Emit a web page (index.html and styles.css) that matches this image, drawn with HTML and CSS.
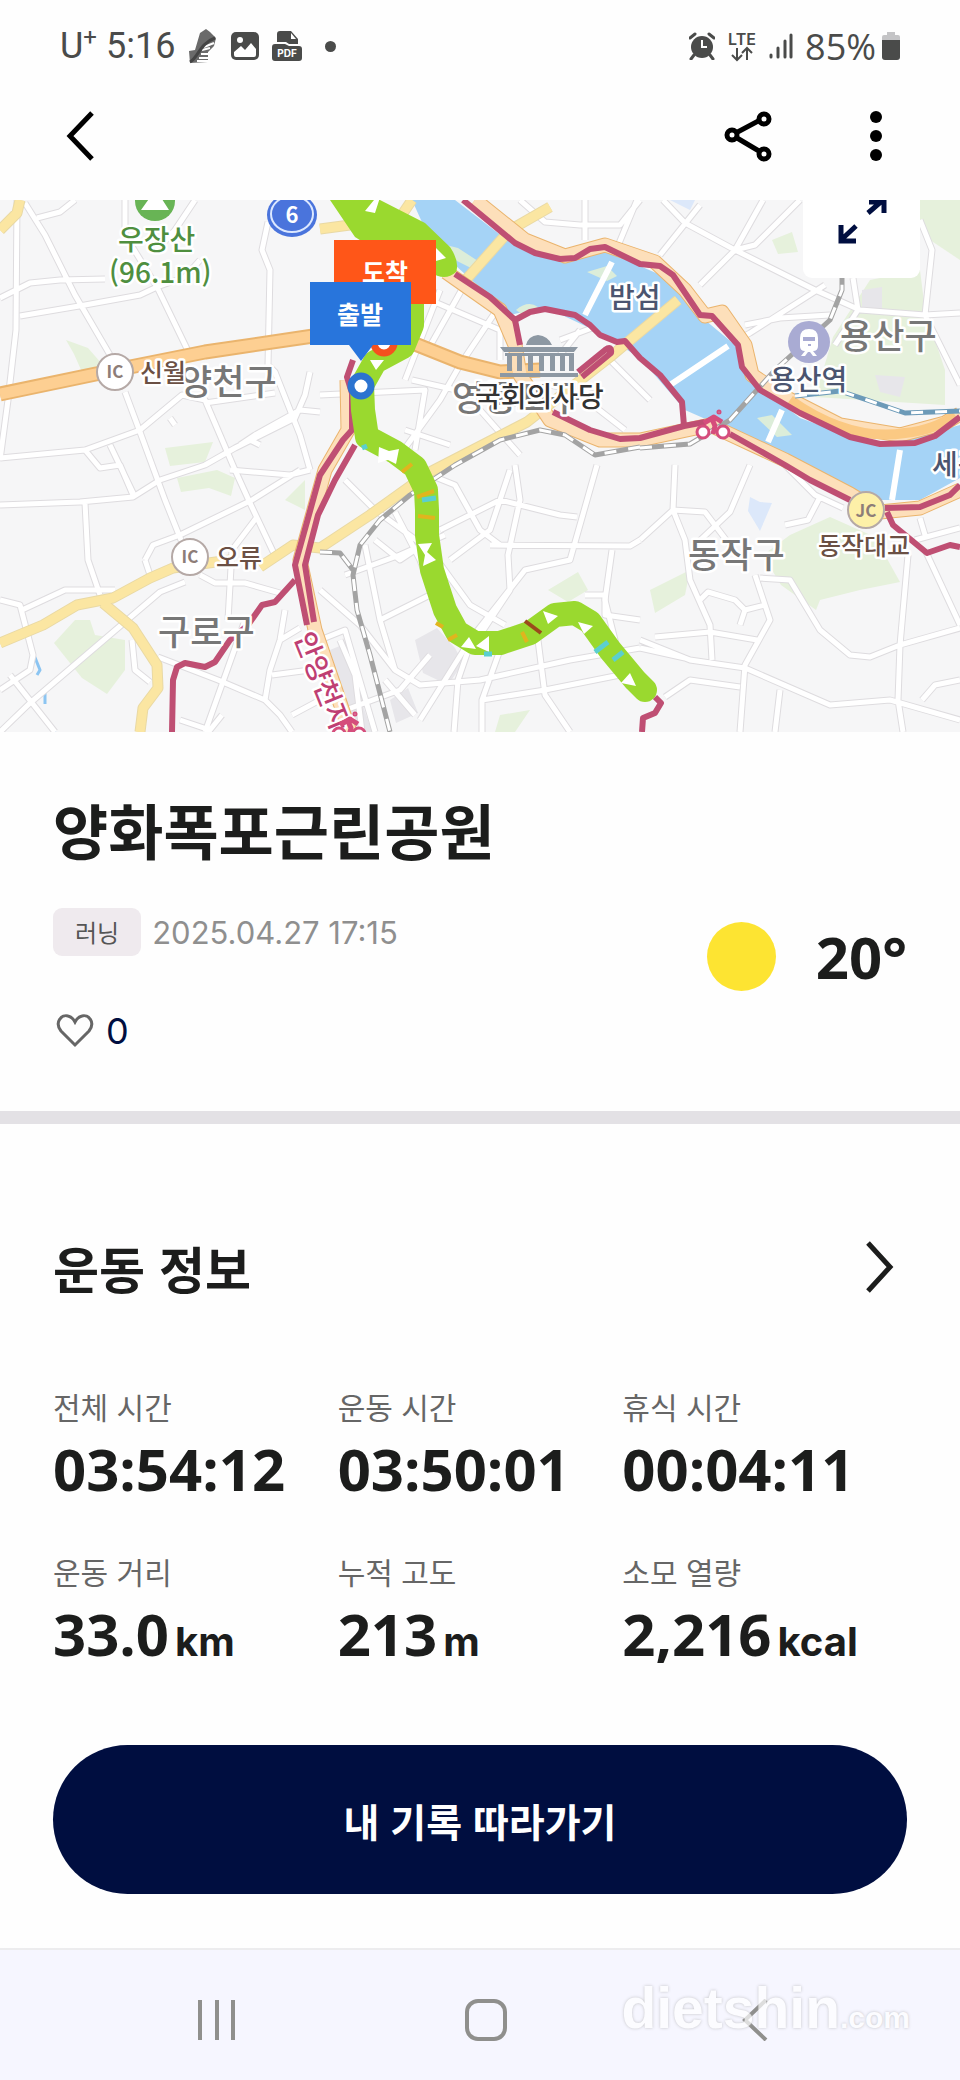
FILE: index.html
```
<!DOCTYPE html>
<html lang="ko">
<head>
    <meta charset="UTF-8" />
    <meta name="viewport" content="width=device-width, initial-scale=1" />
    <title>양화폭포근린공원</title>
    <link rel="stylesheet" href="styles.css">
</head>
<body>
    <div class="status-bar">
        <div class="status-left">
            <span class="carrier">U<sup>+</sup></span>
            <span class="clock">5:16</span>
            <svg class="status-shoe" width="30" height="36" viewBox="0 0 30 36">
                <path d="M1 23l6-1 5-17 6-4 4 3 6 6-2 8-6 6v10L2 35z" fill="#6a6a6a" />
                <path d="M16 19l10-4M14 22l8-2M13 26h7M11 30h9M9 33h11" stroke="#fff" stroke-width="2" />
                <path d="M2 34c8-4 10-19 25-24" stroke="#444" stroke-width="3" fill="none" />
            </svg>
            <svg class="status-photo" width="28" height="28" viewBox="0 0 28 28">
                <rect width="28" height="28" rx="5" fill="#4a4b4a" />
                <circle cx="9" cy="8" r="3" fill="#fff" />
                <path d="M3 20l7-6 4 4 6-7 5 6v6q0 2-2 2H5q-2 0-2-2z" fill="#fff" />
            </svg>
            <svg class="status-pdf" width="30" height="30" viewBox="0 0 30 30">
                <path d="M5 11V3q0-3 3-3h11l7 8v5h-9l-3-2z" fill="#4a4b4a" />
                <path d="M19 2v6h5z" fill="#fff" />
                <path d="M0 16q0-3 3-3h10l4 2h10q3 0 3 3v9q0 3-3 3H3q-3 0-3-3z" fill="#4a4b4a" />
                <text x="15" y="26" text-anchor="middle" class="pdf-text">PDF</text>
            </svg>
            <span class="status-dot"></span>
        </div>
        <div class="status-right">
            <svg width="26" height="28" viewBox="0 0 26 28">
                <circle cx="13" cy="15" r="11" fill="#4a4b4a" />
                <path d="M1 6l5-4M25 6l-5-4M5 23l-3 4M21 23l3 4" stroke="#4a4b4a" stroke-width="3" stroke-linecap="round" />
                <path d="M13 8v7h5" stroke="#fff" stroke-width="2" fill="none" />
            </svg>
            <svg width="30" height="32" viewBox="0 0 30 32">
                <text x="15" y="15" text-anchor="middle" class="lte-text">LTE</text>
                <path d="M10 18v11M5 25l5 5 5-5M20 30V19M15 23l5-5 5 5" stroke="#4a4b4a" stroke-width="2" fill="none" />
            </svg>
            <svg width="24" height="26" viewBox="0 0 24 26">
                <path d="M2 22v2M9 15v9M16 8v16M22 2v22" stroke="#4a4b4a" stroke-width="3" stroke-linecap="round" />
            </svg>
            <span class="battery-text">85%</span>
            <svg width="18" height="28" viewBox="0 0 18 28">
                <path d="M0 8V5q0-2 2-2h3V0h8v3h3q2 0 2 2v3z" fill="#c4c4c6" />
                <path d="M0 8h18v17q0 3-3 3H3q-3 0-3-3z" fill="#4a4b4a" />
            </svg>
        </div>
    </div>

    <header class="app-bar">
        <button type="button" class="icon-btn" aria-label="뒤로">
            <svg width="30" height="52" viewBox="0 0 30 52">
                <path d="M26 3L4 26l22 23" stroke="#000" stroke-width="5" fill="none" />
            </svg>
        </button>
        <div class="app-actions">
            <button type="button" class="icon-btn" aria-label="공유">
                <svg width="48" height="52" viewBox="0 0 48 52">
                    <path d="M8 25L40 8M8 25l32 19" stroke="#000" stroke-width="5" />
                    <g fill="#fff" stroke="#000" stroke-width="5">
                        <circle cx="8" cy="25" r="5" />
                        <circle cx="40" cy="9" r="5" />
                        <circle cx="40" cy="44" r="5" />
                    </g>
                </svg>
            </button>
            <button type="button" class="icon-btn" aria-label="더보기">
                <svg width="12" height="52" viewBox="0 0 12 52">
                    <circle cx="6" cy="7" r="6" />
                    <circle cx="6" cy="26" r="6" />
                    <circle cx="6" cy="45" r="6" />
                </svg>
            </button>
        </div>
    </header>

    <div class="map">
        <svg class="map-canvas" viewBox="0 200 960 532" preserveAspectRatio="xMidYMid slice">
            <defs>
                <g id="streets">
                    <path d="M17 200L16 330L8 400L0 460M25 203L45 235L75 295L110 355M125 392L140 432L165 500L183 545M37 218L60 212L75 200M0 298L30 283L60 280L105 279M20 316L85 305L140 295L157 287L185 277L200 260M125 200V235L157 287L190 355" />
                    <path d="M155 252L175 230L195 200M268 222L262 250L270 270L268 365L275 372L300 435L310 470M0 458L85 450L140 430L182 395L205 400L235 470L250 503L277 560M85 450L100 468L120 465L133 495M110 445L135 497" />
                    <path d="M0 505L80 502L133 497L160 480L205 465L235 448L295 418L305 395L310 372M85 503L88 560L100 595M170 418L175 425M205 403L275 393M240 445L255 435L300 410L320 412M250 440L260 445" />
                    <path d="M230 470L290 475L310 470M145 560L153 545L180 535L252 500L300 470M145 560L150 575M200 575L215 583L245 583L280 593M257 517L232 550L228 620M0 600L20 605L33 655L30 670L0 690M22 610L65 590L115 590M185 582L160 592L30 703L0 732M10 675L55 732" />
                    <path d="M158 657L218 680L265 700L280 715L292 732M292 715L320 700M245 620L205 732M285 610L280 640L270 670L265 700M272 675L310 670M132 640L135 670L150 682M180 720L210 730L222 715M280 640L300 628" />
                    <path d="M345 480L375 510L430 550L470 605L505 625M430 475L455 485L480 530L500 545M395 512L420 560L435 600M375 540L400 560L430 540M345 575L400 555L445 535M365 545L380 620L395 670M440 530L500 500L520 505L560 515L577 517M515 465L520 500L508 555L510 590L480 635M450 560L490 530L510 470M490 545L630 546L640 540M597 465L570 560L525 570L470 640L420 720" />
                    <path d="M612 550L605 600L620 660M320 590L360 625L395 670L420 685L480 680L570 660L640 648M380 620L440 590M340 712L400 690L430 655M470 645L458 680L454 732M500 650L482 700L482 732M482 700L545 690L620 675M538 640L545 695L570 732M320 640L345 630L375 732M340 640L355 675L362 732M385 680L415 715" />
                    <path d="M585 595L605 595L605 615L640 620M325 300L380 330M440 290L405 380M470 275L425 355M500 305L460 365L440 400L400 455M430 300L500 330L500 360M412 380L545 410M550 385L600 395M320 395L425 390L415 450M405 430L450 445M480 410L520 455M580 330L560 355M610 360L650 400M580 395L625 430M560 340L640 310" />
                    <path d="M520 200L545 222L580 225L620 225L640 200M585 200L585 240M637 200L610 265M450 200L440 215M663 200L685 223L735 250L815 290L860 310L925 315L960 313M700 205L660 255M763 200L735 250L700 285M800 200L755 245L735 250M825 285L750 333L700 360M920 220L932 250L925 315L950 365L960 385M853 278L858 310L835 345M745 325L780 318L830 315" />
                    <path d="M675 465L673 510L685 540L690 580L710 625L712 660M750 465L730 512L695 545M640 540L673 510L705 512L730 545M785 465L815 495L843 508M820 497L808 520L785 525M700 600L708 592L735 600L745 610L765 605M745 610L740 625M755 575L765 605L770 620L745 665L740 732M760 578L790 580L820 630L850 655L870 657L900 645L960 628M908 555L900 645L898 700L903 732M925 550L960 625M640 640L690 660L745 668L830 705L890 700L960 720M640 648L685 658M655 637L710 632L757 640M665 697L690 680L740 687M780 690L775 732M922 700L935 685L960 680M915 540L960 528M920 518L925 535" />
                </g>
            </defs>

            <rect x="0" y="200" width="960" height="532" fill="#f6f6f7" />

            <!-- parks and blocks -->
            <g fill="#e6f1dc">
                <path d="M66 340l22 8 14 16-20 8-8-18zM165 448l48-6-8 20-35 4zM177 478l40-8 18 8-4 18-22-8-28 4zM285 500l20-20v30zM75 620h15l5 15 30 5v30l-18 24-25-16-28-35z" />
                <path d="M772 240l20-8 6 20-20 2zM900 200h60v60l-30-20zM870 280l50-10 5 40 20 60v35l-130-8 18-60zM790 535l40-18 45 20 25 45-40 8-40 10-4 10-35-25-18-30zM650 590l40-20-5 25-30 18zM548 590l30-18 10 18-20 12zM500 715l30-5-15 22h-20z" />
            </g>
            <path d="M760 502l-10-5-2 14 12 20 12-28zM670 200l20 10 5-10z" fill="#dce8fa" />
            <path d="M415 640l22-12 18 20 8 15-15 22-25-12zM330 650l12-5 30 87h-20zM390 700l18-12 10 25-22 10zM862 290l20-3v22h-20zM875 375l30 2-5 20-20-5z" fill="#e7e6ea" />
            <path d="M34 655l6 15-3 5M45 690v14M50 725l5 7" stroke="#8cc5f2" stroke-width="3" fill="none" />

            <use href="#streets" class="street-edge" />
            <use href="#streets" class="street" />

            <!-- river -->
            <path d="M412 200H455L515 246L560 262L605 250L640 266L672 280L705 320L735 345L745 375L800 418L880 447L960 425V478L920 500L860 500L735 432L685 410L640 358L600 333L545 307L510 315L455 265L430 240z" fill="#a5d3f6" />
            <path d="M438 243l20 5 20 13-5 8-30-15zM516 310q12-10 22-3l-15 8zM587 272l20-6 10 10-10 5zM757 418l15-3 20 20-15 2z" fill="#dcedd9" />
            <path d="M670 385L728 346M768 442L782 410M900 450L892 500M585 315L612 262" stroke="#fff" stroke-width="6" />

            <!-- yellow roads -->
            <g class="road-edge">
                <path d="M20 200L17 213L0 230M0 643L43 625L77 605L113 598L150 578L173 568L230 560M260 567L293 545L320 548L370 515L430 472L527 422L610 357L678 300M103 603L133 628L157 665L158 688L143 708L140 732M320 229L350 225M412 200L395 225M463 283L510 230L550 207" />
            </g>
            <g class="road">
                <path d="M20 200L17 213L0 230M0 643L43 625L77 605L113 598L150 578L173 568L230 560M260 567L293 545L320 548L370 515L430 472L527 422L610 357L678 300M103 603L133 628L157 665L158 688L143 708L140 732M320 229L350 225M412 200L395 225M463 283L510 230L550 207" />
            </g>

            <!-- orange expressways -->
            <g class="highway-edge">
                <path d="M0 394L115 370L205 352L320 335M410 342L460 362L500 372L540 370" />
                <path d="M475 200L525 240L565 256L605 245L655 262L685 290L705 316L722 312L745 345L752 375L785 397L840 425L900 435L945 423L960 414" />
                <path d="M446 272L500 310L515 345L520 375L550 420L600 440L640 440L710 425L785 460L850 494L880 512L920 508L960 490" />
                <path d="M347 380L348 430L325 470L300 560L315 630L350 732" />
            </g>
            <g class="highway">
                <path d="M0 394L115 370L205 352L320 335M410 342L460 362L500 372L540 370" />
            </g>
            <g class="highway-light">
                <path d="M475 200L525 240L565 256L605 245L655 262L685 290L705 316L722 312L745 345L752 375L785 397L840 425L900 435L945 423L960 414" />
                <path d="M446 272L500 310L515 345L520 375L550 420L600 440L640 440L710 425L785 460L850 494L880 512L920 508L960 490" />
                <path d="M347 380L348 430L325 470L300 560L315 630L350 732" />
            </g>
            <path d="M790 400Q850 442 905 433Q935 430 955 415" stroke="#fbc983" stroke-width="10" fill="none" />

            <!-- railways -->
            <g class="rail">
                <path d="M640 447L595 455L565 435L540 430L500 440L455 465L410 495L380 520L360 545L353 575L357 610L370 655L390 732M320 552L340 553L353 570M640 448L690 444L730 420L775 370L830 320L842 290V278" />
            </g>
            <g class="rail-dash">
                <path d="M640 447L595 455L565 435L540 430L500 440L455 465L410 495L380 520L360 545L353 575L357 610L370 655L390 732M320 552L340 553L353 570M640 448L690 444L730 420L775 370L830 320L842 290V278" />
            </g>
            <path d="M795 396L840 391L870 401L905 413L960 411" class="rail rail-blue" />
            <path d="M795 396L840 391L870 401L905 413L960 411" class="rail-dash" />

            <!-- bicycle paths -->
            <g class="bike-path">
                <path d="M463 200L515 243L535 253L560 259L575 258L590 249L605 247L640 264L660 266L673 275L700 315L712 316L738 345L742 367L760 390L800 413L850 437L880 444L915 443L935 436L960 417" />
                <path d="M455 274L490 297L515 320L530 312L545 309L575 315L590 325L600 335L617 342L625 341L640 358L660 375L682 402L684 426M515 320L520 345" />
                <path d="M553 412L590 430L620 439L640 438L684 426L705 422M730 434L785 465L810 480L850 500M885 508L920 507L950 495L960 485M887 512L893 525L927 553L950 545L960 547" />
                <path d="M578 372L605 350Q612 345 611 353L582 377" />
                <path d="M353 360L347 377L352 393L352 430L343 440L320 475L295 565L307 625M355 445L335 480L318 515L305 565L314 622" />
                <path d="M295 580L275 602L262 605L248 625L230 640L215 662L205 667L185 663L177 667L173 680L172 732M655 697L661 703L655 713L643 718L642 732" />
            </g>

            <!-- track -->
            <path d="M330 200L355 237L395 262L430 272Q445 282 456 272Q460 262 450 247L425 223L380 200z" fill="#9ad92f" />
            <path d="M412 300L412 325L403 347L375 362L362 385L363 410L367 437L395 452L415 467L426 490L427 510L427 535L432 570L445 610L457 632L475 643L500 643L530 633L555 615L575 613L590 622L610 650L635 680L645 690" class="track" />
            <path d="M374 200l10-15-9 28-10-2zM436 248l10 10-10 3zM370 360h14l-8 10zM379 447l10 4 10-2-3 15-8-4-10 3zM418 544l14-1-5 9 9 8-13 6 2-11zM461 647l8-10 7 12zM476 646l13-10v16zM543 611l15 5-10 8zM578 622l15 4-9 8zM621 683l9-10 6 13z" fill="#fff" />
            <path d="M417 497l17-6M418 516l17 2M436 623l7 4M448 640l9-5M522 632l5 10M402 472l10-8" stroke="#e0b51e" stroke-width="4" />
            <path d="M422 500l14-2M595 652l13-10M613 660l10-8M484 654h8M362 448l5-2" stroke="#5bcfcf" stroke-width="5" />
            <path d="M525 621l16 12" stroke="#9a4a1c" stroke-width="4" />

            <!-- place markers -->
            <circle cx="155" cy="201" r="20" fill="#68b455" />
            <path d="M141 210l10-14 5 4 4-4 9 14z" fill="#fff" />
            <ellipse cx="292" cy="215" rx="25" ry="22" fill="#4a74dc" />
            <ellipse cx="292" cy="214" rx="21" ry="18" fill="none" stroke="#dce8ff" stroke-width="2" />
            <text x="292" y="223" text-anchor="middle" class="shield-text">6</text>
            <g class="junction">
                <circle cx="115" cy="372" r="18" />
                <circle cx="190" cy="557" r="18" />
                <circle cx="866" cy="510" r="18" class="junction-jc" />
            </g>
            <g class="junction-text" text-anchor="middle">
                <text x="115" y="378">IC</text>
                <text x="190" y="563">IC</text>
                <text x="866" y="517">JC</text>
            </g>

            <g class="district">
                <text x="180" y="395">양천구</text>
                <text x="452" y="411">영등포구</text>
                <text x="840" y="349">용산구</text>
                <text x="688" y="568">동작구</text>
                <text x="158" y="645">구로구</text>
            </g>
            <g class="place place-green">
                <text x="118" y="250">우장산</text>
                <text x="109" y="283">(96.1m)</text>
            </g>
            <g class="place place-brown">
                <text x="140" y="382">신월</text>
                <text x="216" y="567">오류</text>
                <text x="818" y="555">동작대교</text>
            </g>
            <g class="place place-navy">
                <text x="609" y="308">밤섬</text>
                <text x="770" y="390">용산역</text>
                <text x="932" y="475">세종</text>
            </g>
            <text x="475" y="407" class="place place-dark">국회의사당</text>
            <text x="294" y="637" transform="rotate(68 294 637)" class="place place-pink">안양천자</text>

            <g fill="#8d98a3">
                <path d="M526 345q2-9 12-10q10 1 14 10zM500 347h78l-4 5h-70zM505 353h69v3h-69zM500 373h78v4h-78z" />
                <path d="M507 356h5v15h-5zM517 356h5v15h-5zM528 356h5v15h-5zM539 356h5v15h-5zM550 356h5v15h-5zM560 356h5v15h-5zM569 356h5v15h-5z" />
            </g>
            <circle cx="809" cy="342" r="21" fill="#a9abd3" />
            <path d="M800 338q0-9 9-9t9 9v8q0 5-5 5l4 5h-4l-3-4h-2l-3 4h-4l4-5q-5 0-5-5z" fill="#fff" />
            <path d="M803 337h12v4h-12zM808 344h3v2h-3z" fill="#a9abd3" />
            <g id="bicycle" fill="none" stroke="#d54d7c" stroke-width="3">
                <circle cx="703" cy="432" r="6" fill="#fff" />
                <circle cx="723" cy="432" r="6" fill="#fff" />
                <path d="M704 423l10-6 8 5M712 419l3 7-2 8" stroke-width="5" />
                <circle cx="719" cy="412" r="1" />
            </g>
            <use href="#bicycle" x="-364" y="302" />

            <!-- finish and start flags -->
            <circle cx="384" cy="343" r="10" fill="#fff" stroke="#f5511e" stroke-width="7" />
            <rect x="334" y="240" width="102" height="64" fill="#ff5618" />
            <text x="385" y="282" text-anchor="middle" class="flag-text">도착</text>
            <path d="M310 282h101v63h-38l-12 16-12-16h-39z" fill="#2875dc" />
            <text x="360" y="324" text-anchor="middle" class="flag-text">출발</text>
            <circle cx="361" cy="386" r="10" fill="#fff" stroke="#2c74d0" stroke-width="7" />
        </svg>
        <button type="button" class="expand-btn" aria-label="지도 확대">
            <svg width="50" height="44" viewBox="0 0 50 44">
                <path d="M31 13L46 0M32 2h15v11M19 26L4 40M4 25v16h15" stroke="#000e40" stroke-width="5" fill="none" />
            </svg>
        </button>
    </div>

    <main>
        <section class="summary">
            <h1>양화폭포근린공원</h1>
            <div class="summary-row">
                <div class="meta">
                    <span class="badge">러닝</span>
                    <time datetime="2025-04-27T17:15">2025.04.27 17:15</time>
                </div>
                <div class="weather">
                    <span class="sun"></span>
                    <span class="temp">20°</span>
                </div>
            </div>
            <button type="button" class="like-btn" aria-label="좋아요">
                <svg width="38" height="34" viewBox="0 0 38 34">
                    <path d="M19 31L5 17C-2 8 6 0 12 2c4 1 6 4 7 6 1-2 3-5 7-6 6-2 14 6 7 15z" stroke="#666" stroke-width="3" fill="none" />
                </svg>
                <span>0</span>
            </button>
        </section>

        <section class="workout">
            <a href="#stats" class="section-head">
                <h2>운동 정보</h2>
                <svg width="30" height="52" viewBox="0 0 30 52">
                    <path d="M3 2l22 24L3 50" stroke="#1c1d1c" stroke-width="5" fill="none" />
                </svg>
            </a>
            <dl class="stats" id="stats">
                <div>
                    <dt>전체 시간</dt>
                    <dd>03:54:12</dd>
                </div>
                <div>
                    <dt>운동 시간</dt>
                    <dd>03:50:01</dd>
                </div>
                <div>
                    <dt>휴식 시간</dt>
                    <dd>00:04:11</dd>
                </div>
                <div>
                    <dt>운동 거리</dt>
                    <dd>33.0<small>km</small></dd>
                </div>
                <div>
                    <dt>누적 고도</dt>
                    <dd>213<small>m</small></dd>
                </div>
                <div>
                    <dt>소모 열량</dt>
                    <dd>2,216<small>kcal</small></dd>
                </div>
            </dl>
            <button type="button" class="follow-btn">내 기록 따라가기</button>
        </section>
    </main>

    <nav class="nav-bar">
        <button type="button" class="icon-btn" aria-label="최근 앱">
            <svg width="42" height="42" viewBox="0 0 42 42">
                <path d="M4 1v40M21 1v40M37 1v40" stroke="#8f8f8d" stroke-width="4" />
            </svg>
        </button>
        <button type="button" class="icon-btn" aria-label="홈">
            <svg width="42" height="42" viewBox="0 0 42 42">
                <rect x="2" y="2" width="38" height="38" rx="11" stroke="#8f8f8d" stroke-width="4" fill="none" />
            </svg>
        </button>
        <button type="button" class="icon-btn" aria-label="이전">
            <svg width="42" height="42" viewBox="0 0 42 42">
                <path d="M32 1L11 21l21 20" stroke="#8f8f8d" stroke-width="4" fill="none" />
            </svg>
        </button>
        <div class="watermark">dietshin<span>.com</span></div>
    </nav>
</body>
</html>
```
FILE: styles.css
```
* {
    box-sizing: border-box;
}
body {
    margin: 0;
    min-height: 100vh;
    display: flex;
    flex-direction: column;
    background: #fefefe;
    color: #1c1d1c;
    font-family: "Noto Sans CJK KR", sans-serif;
}
button {
    padding: 0;
    border: none;
    background: none;
    font-family: inherit;
    cursor: pointer;
}
svg {
    display: block;
}

/* status bar */
.status-bar {
    display: flex;
    justify-content: space-between;
    align-items: center;
    height: 92px;
    padding: 0 60px;
    color: #4a4b4a;
    font-family: Roboto, sans-serif;
    font-size: 36px;
}
.status-left, .status-right {
    display: flex;
    align-items: center;
}
.status-left {
    gap: 13px;
}
.status-right {
    gap: 12px;
}
.carrier {
    margin-right: -4px;
}
.carrier sup {
    font-size: 24px;
    line-height: 0;
}
.status-dot {
    width: 11px;
    height: 11px;
    margin-left: 10px;
    border-radius: 50%;
    background: #4a4b4a;
}
.battery-text {
    margin-right: -6px;
    font-family: "Open Sans", sans-serif;
}
.pdf-text {
    font: 700 10px Inter, sans-serif;
    fill: #fff;
}
.lte-text {
    font: 600 16px Inter, sans-serif;
    fill: #4a4b4a;
}

/* app bar */
.app-bar {
    display: flex;
    justify-content: space-between;
    align-items: center;
    height: 88px;
    margin-bottom: 20px;
    padding: 0 78px 0 66px;
}
.app-actions {
    display: flex;
    gap: 98px;
}

/* map */
.map {
    position: relative;
    overflow: hidden;
}
.map-canvas {
    width: 100%;
    height: auto;
}
.map-canvas path {
    stroke-linejoin: round;
}
.map-canvas text {
    font-family: "Noto Sans CJK KR", sans-serif;
}
.street {
    fill: none;
    stroke: #fff;
    stroke-width: 5;
}
.street-edge {
    fill: none;
    stroke: #dedcdf;
    stroke-width: 7;
}
.road {
    fill: none;
    stroke: #fbe6a2;
    stroke-width: 9;
}
.road-edge {
    fill: none;
    stroke: #e9d9a4;
    stroke-width: 11;
}
.highway {
    fill: none;
    stroke: #fdcf92;
    stroke-width: 11;
}
.highway-light {
    fill: none;
    stroke: #fddfba;
    stroke-width: 13;
}
.highway-edge {
    fill: none;
    stroke: #eab46d;
    stroke-width: 15;
}
.rail {
    fill: none;
    stroke: #a3a3a3;
    stroke-width: 5;
}
.rail-blue {
    stroke: #6c9ab8;
}
.rail-dash {
    fill: none;
    stroke: #fff;
    stroke-width: 3;
    stroke-dasharray: 12 12;
}
.bike-path {
    fill: none;
    stroke: #bf4f73;
    stroke-width: 6;
}
.track {
    fill: none;
    stroke: #9ad92f;
    stroke-width: 24;
    stroke-linecap: round;
}
.shield-text {
    font-size: 22px;
    font-weight: 700;
    fill: #fff;
}
.junction {
    fill: #fff;
    stroke: #b5a9a6;
    stroke-width: 2;
}
.junction-jc {
    fill: #fdf0a8;
}
.junction-text {
    font-size: 17px;
    font-weight: 700;
    fill: #8d7d78;
}
.district, .place {
    font-weight: 500;
    stroke: #fff;
    stroke-width: 5;
    stroke-linejoin: round;
    paint-order: stroke;
}
.district {
    font-size: 35px;
    fill: #777;
}
.place {
    font-size: 28px;
}
.place-green {
    fill: #4f8f3f;
}
.place-brown {
    font-size: 25px;
    fill: #6b5044;
}
.place-navy {
    fill: #4b5570;
}
.place-dark {
    fill: #333;
}
.place-pink {
    fill: #bf3f73;
}
.flag-text {
    font-size: 25px;
    font-weight: 700;
    fill: #fff;
}
.expand-btn {
    position: absolute;
    top: 0;
    right: 40px;
    width: 117px;
    height: 78px;
    border-radius: 0 0 9px 9px;
    background: #fff;
}
.expand-btn svg {
    margin: -34px 0 0 34px;
}

/* summary */
.summary {
    padding: 53px 53px 53px;
    border-bottom: 13px solid #e3e1e5;
}
h1 {
    margin: 0;
    font-size: 60px;
    line-height: 88px;
}
.summary-row {
    display: flex;
    justify-content: space-between;
    margin-top: 35px;
}
.meta {
    display: flex;
    align-items: center;
    gap: 11px;
    height: 48px;
    color: #8f8f8f;
    font-family: Inter, sans-serif;
    font-size: 31px;
}
.badge {
    padding: 0 22px;
    border-radius: 9px;
    background: #efeaee;
    color: #555;
    font-family: "Noto Sans CJK KR", sans-serif;
    font-size: 24px;
    line-height: 48px;
}
.weather {
    display: flex;
    align-items: center;
    gap: 40px;
    height: 96px;
}
.sun {
    width: 69px;
    height: 69px;
    border-radius: 50%;
    background: #fde432;
}
.temp {
    font-family: "Open Sans", sans-serif;
    font-size: 58px;
    font-weight: 700;
}
.like-btn {
    display: flex;
    align-items: center;
    gap: 12px;
    height: 48px;
    margin: 3px;
    color: #000e40;
    font-family: Inter, sans-serif;
    font-size: 36px;
}

/* workout */
.workout {
    padding: 106px 53px 54px;
}
.section-head {
    display: flex;
    justify-content: space-between;
    align-items: center;
    padding-right: 12px;
    color: inherit;
    text-decoration: none;
}
h2 {
    margin: 0;
    font-size: 50px;
    line-height: 74px;
}
.stats {
    display: grid;
    grid-template-columns: repeat(3, 1fr);
    row-gap: 42px;
    margin: 80px 0 73px;
}
.stats dt {
    color: #666;
    font-size: 30px;
    line-height: 44px;
}
.stats dd {
    margin: 3px 0 0;
    font-family: "Open Sans", sans-serif;
    font-size: 58px;
    font-weight: 700;
    line-height: 76px;
    white-space: nowrap;
}
.stats small {
    margin-left: 6px;
    font-family: Inter, sans-serif;
    font-size: 40px;
    line-height: 40px;
}
.follow-btn {
    width: 100%;
    height: 149px;
    border-radius: 75px;
    background: #000e40;
    color: #fff;
    font-size: 39px;
    font-weight: 700;
}

/* system navigation */
.nav-bar {
    position: relative;
    flex: 1;
    display: flex;
    justify-content: space-around;
    align-items: center;
    min-height: 130px;
    padding: 10px 71px 0 82px;
    border-top: 2px solid #ececee;
    background: #f6f6ff;
}
.watermark {
    position: absolute;
    top: 0;
    right: 50px;
    color: #fff;
    font-family: "Liberation Sans", sans-serif;
    font-size: 57px;
    font-weight: 700;
    line-height: 116px;
    opacity: 0.7;
    text-shadow: 0 0 3px #aaa;
    pointer-events: none;
}
.watermark span {
    font-size: 30px;
}
```
